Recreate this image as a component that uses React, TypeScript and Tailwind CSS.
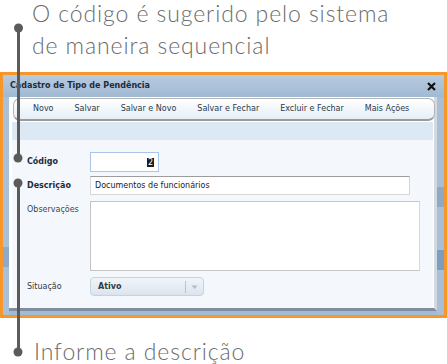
import React from 'react';

const ui = "font-['DejaVu_Sans',Verdana,sans-serif]";
const callout = "font-['Lato',sans-serif] font-light text-[23px] tracking-[0.9px] text-[#6b6b6b]";

const toolbarItems = ['Novo', 'Salvar', 'Salvar e Novo', 'Salvar e Fechar', 'Excluir e Fechar', 'Mais Ações'];

const Annotations: React.FC = () => (
  <svg className="absolute left-0 top-0 pointer-events-none" width="447" height="364">
    <line x1="18.5" y1="28" x2="18.5" y2="158" stroke="#5b5b5b" strokeWidth="3" />
    <line x1="18.5" y1="183" x2="18.5" y2="352" stroke="#5b5b5b" strokeWidth="3" />
    <circle cx="18.5" cy="28" r="4.5" fill="#5b5b5b" />
    <circle cx="18" cy="158" r="4.5" fill="#5b5b5b" />
    <circle cx="18" cy="183" r="4.5" fill="#5b5b5b" />
    <circle cx="18" cy="352" r="4.5" fill="#5b5b5b" />
  </svg>
);

const App: React.FC = () => {
  return (
    <div className="relative w-[447px] h-[364px] bg-white overflow-hidden flex flex-col">
      {/* callout text top */}
      <div className={`h-[72px] pl-[32px] ${callout}`}>
        <div className="h-[26px] leading-[26px]">O código é sugerido pelo sistema</div>
        <div className="mt-[6px] h-[26px] leading-[26px]">de maneira sequencial</div>
      </div>

      {/* screenshot frame */}
      <div className={`h-[246px] border-[3px] border-[#f7962b] bg-[#a2bad2] flex flex-col ${ui}`}>
        <div className="h-[22px] flex items-center justify-between pl-[7px] pr-[8px] bg-gradient-to-b from-[#b7cbe0] to-[#a0b9d2]">
          <span className="text-[8px] font-bold text-[#1d2b3b]">Cadastro de Tipo de Pendência</span>
          <svg width="9" height="9" viewBox="0 0 9 9">
            <path d="M1 1L8 8M8 1L1 8" stroke="#111" strokeWidth="2.2" />
          </svg>
        </div>

        <div className="flex-1 flex">
          <div className="w-[6px] flex flex-col">
            <div className="h-[150px] bg-[#a9c0d7]" />
            <div className="h-[20px] bg-[#8eaaca]" />
            <div className="flex-1 bg-[#a9c0d7]" />
          </div>

          <div className="w-[428px] h-[214px] bg-white border-r-[3px] border-b-[3px] border-r-[#d3d9e0] border-b-[#7d8ea2] flex flex-col">
            {/* toolbar */}
            <div className="mt-[1px] ml-[4px] mr-[-1px] h-[23px] rounded-[7px] border border-[#b5b5b5] border-b-[2px] border-b-[#9a9a9a] bg-gradient-to-b from-[#ffffff] to-[#e6eef6] flex items-center pl-[19px] gap-[21px] text-[8px] text-[#2b3a4b]">
              {toolbarItems.map((t) => (
                <span key={t}>{t}</span>
              ))}
            </div>
            <div className="mt-[1px] ml-[3px] mr-[1px] h-[18px] bg-[#dce8f4]" />

            {/* form */}
            <div className="ml-[3px] mr-[1px] flex-1 bg-[#f4f8fc] pl-[15px] flex flex-col text-[8px] text-[#1c2c3c]">
              <div className="mt-[12px] h-[20px] flex items-center">
                <span className="w-[63px] font-bold">Código</span>
                <div className="w-[69px] h-[20px] border border-[#a9c6e8] bg-white flex items-center justify-end pr-[4px]">
                  <span className="bg-[#1c1c1c] text-white text-[8px] leading-[9px] px-[1px]">2</span>
                </div>
              </div>
              <div className="mt-[4px] h-[19px] flex items-center">
                <span className="w-[63px] font-bold">Descrição</span>
                <div className="w-[320px] h-[19px] border border-[#d6d6d6] border-t-[#9c9c9c] bg-white flex items-center pl-[4px] text-[#222]">
                  Documentos de funcionários
                </div>
              </div>
              <div className="mt-[6px] flex">
                <span className="w-[63px] pt-[3px] text-[#3a4652]">Observações</span>
                <div className="w-[330px] h-[70px] border border-[#c4c4c4] border-r-[#d8d8d8] bg-white" />
              </div>
              <div className="mt-[6px] h-[19px] flex items-center">
                <span className="w-[63px] text-[#2c3a48]">Situação</span>
                <div className="w-[114px] h-[19px] rounded-[4px] border border-[#c6d2de] bg-gradient-to-b from-[#f1f5f9] to-[#dbe4ee] flex items-center">
                  <span className="flex-1 pl-[7px] font-bold text-[#2e3a46]">Ativo</span>
                  <div className="w-px h-[12px] bg-[#b9c4d0]" />
                  <svg width="17" height="8" viewBox="0 0 17 8">
                    <path d="M5.5 2.5h6l-3 3.5z" fill="#b3bcc6" />
                  </svg>
                </div>
              </div>
            </div>
          </div>

          <div className="flex-1 flex flex-col">
            <div className="h-[90px] bg-[#a8bfd6]" />
            <div className="h-[20px] bg-[#8fa9c5]" />
            <div className="h-[43px] bg-[#a8bfd6]" />
            <div className="h-[20px] bg-[#7d9dc0]" />
            <div className="flex-1 bg-[#a8bfd6]" />
          </div>
        </div>
      </div>

      {/* callout text bottom */}
      <div className={`pl-[34px] mt-[20px] h-[26px] leading-[26px] ${callout}`}>
        Informe a descrição
      </div>

      <Annotations />
    </div>
  );
};

export default App;
